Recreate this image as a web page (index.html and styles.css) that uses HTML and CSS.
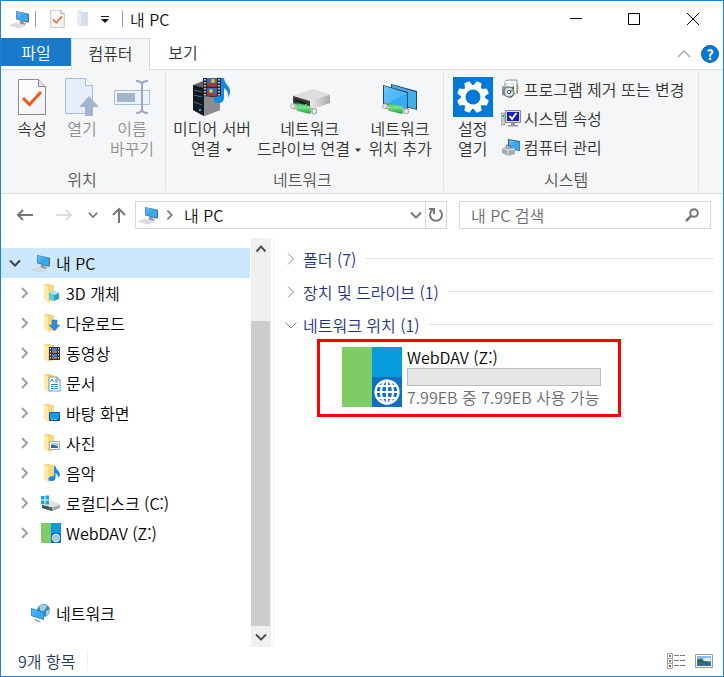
FILE: index.html
```html
<!DOCTYPE html>
<html lang="ko">
<head>
<meta charset="utf-8">
<meta name="viewport" content="width=device-width, initial-scale=1">
<title>내 PC</title>
<link rel="stylesheet" href="styles.css">
</head>
<body>
<svg class="defs" aria-hidden="true">
  <defs>
    <linearGradient id="screen" x1="0" y1="0" x2="1" y2="1"><stop offset="0" stop-color="#5cc4ff"/><stop offset=".5" stop-color="#31a8f7"/><stop offset="1" stop-color="#36b0fb"/></linearGradient>
    <linearGradient id="paper" x1="0" y1="0" x2="1" y2="1"><stop offset="0" stop-color="#fff"/><stop offset="1" stop-color="#eef1f5"/></linearGradient>
    <linearGradient id="metal" x1="0" y1="0" x2="1" y2="0"><stop offset="0" stop-color="#bfbfbf"/><stop offset=".5" stop-color="#e8e8e8"/><stop offset="1" stop-color="#a8a8a8"/></linearGradient>
    <linearGradient id="pipe" x1="0" y1="0" x2="0" y2="1"><stop offset="0" stop-color="#2fb54a"/><stop offset=".4" stop-color="#7be48c"/><stop offset="1" stop-color="#159a35"/></linearGradient>
  </defs>
  <symbol id="pc" viewBox="0 0 20 20">
    <path d="M6 2 19 4.700v8.300l-1.500.8L6 10.300z" fill="#5d6c77"/>
    <path d="M6.500 2.600 17.800 5v7.700L6.500 9.800z" fill="url(#screen)"/>
    <path d="m10 11.500 4 1.100v1.400l2.500.8-2.500 1.200-4.500-1.500z" fill="#8d99a3"/>
    <path d="m0 16 5-2.500 10 2.700-5 2.800z" fill="#dfe4e8"/><path d="m0 16 10 3 5-2.800v.6l-5 2.700-10-2.800z" fill="#b9c1c8"/>
    <path d="m2.500 15.500 8 2.300M5 14.500l8 2.200" stroke="#c3cbd1" stroke-width=".6"/>
  </symbol>
  <symbol id="check-page" viewBox="0 0 28 36">
    <path d="M.5.500h20l7 7v28H.5z" fill="url(#paper)" stroke="#8a8a8a"/><path d="M20.500.500v7h7" fill="#dfe3e8" stroke="#8a8a8a"/>
    <path d="m5 19 6.500 6.500L23 13" fill="none" stroke="#f05a1c" stroke-width="3"/>
  </symbol>
  <symbol id="folder" viewBox="0 0 20 20">
    <path d="M3 1h6l1 1h3v14l-7 1-3-1z" fill="#f5d272"/><path d="m3 1 4 2.500V19l-4-3z" fill="#ffe9a8"/><path d="m7 3.500 6-.5v14l-6 2z" fill="#f8d878"/>
  </symbol>
  <symbol id="right" viewBox="0 0 12 14"><path d="m3 2 5 5-5 5" fill="none" stroke="currentColor" stroke-width="2"/></symbol>
  <symbol id="thin-right" viewBox="0 0 12 14"><path d="m3 1.500 5.500 5.500L3 12.500" fill="none" stroke="currentColor"/></symbol>
  <symbol id="down" viewBox="0 0 14 12"><path d="m2 3.500 5 5 5-5" fill="none" stroke="currentColor" stroke-width="2"/></symbol>
  <symbol id="up" viewBox="0 0 14 12"><path d="m2.500 8.500 4.500-5 4.500 5" fill="none" stroke="currentColor" stroke-width="2"/></symbol>
  <symbol id="caret" viewBox="0 0 8 5"><path d="M1 0.500h6l-3 3.500z" fill="currentColor"/></symbol>
  <symbol id="cable" viewBox="0 0 30 14">
    <path d="M2 2.500 28 8v4L2 6.500z" fill="#c9ced0" stroke="#999"/><path d="M7 1 22 4.500v8.500L7 9.500z" fill="url(#pipe)"/>
    <ellipse cx="3" cy="4.500" rx="2.500" ry="2.600" fill="#e3e6e8" stroke="#aaa"/><ellipse cx="26" cy="10" rx="2.500" ry="3" fill="#e9ebec" stroke="#999"/>
  </symbol>
  <symbol id="webdav" viewBox="0 0 60 60">
    <path d="M0 0h30v60H0z" fill="#7fcc66"/><path d="M30 0h30v30H30z" fill="#059cdd"/><path d="M30 30h30v30H30z" fill="#0f6fc8"/>
    <g fill="none" stroke="#fff" stroke-width="2.200"><circle cx="45" cy="45" r="11.500"/><ellipse cx="45" cy="45" rx="6" ry="11.500"/><path d="M45 33v24M33 45h24M36 39h18M36 51h18"/></g>
  </symbol>
</svg>

<div class="window">
  <header class="titlebar">
    <svg class="i20"><use href="#pc"/></svg>
    <span class="sep"></span>
    <button class="quick" aria-label="속성"><svg width="15" height="18"><use href="#check-page"/></svg></button>
    <button class="quick" aria-label="새 폴더"><svg width="14" height="18" viewBox="0 0 14 18"><path d="M1 1h5v1h6v14H5z" fill="#d3deed"/><path d="m1 1 4 2v14l-4-2z" fill="#e8eef7"/></svg></button>
    <button class="quick more" aria-label="빠른 실행 도구 모음 사용자 지정"><svg width="8" height="8" viewBox="0 0 8 8"><path d="M0 1.500h8" stroke="#222"/><path d="M0 4h8L4 8z" fill="#111"/></svg></button>
    <span class="sep"></span>
    <h1 class="title">내 PC</h1>
    <div class="captions">
      <button aria-label="최소화"><svg width="14" height="14" viewBox="0 0 14 14"><path d="M1 6.500h12" stroke="#000"/></svg></button>
      <button aria-label="최대화"><svg width="14" height="14" viewBox="0 0 14 14"><path d="M1.500 1.500h11v11h-11z" fill="none" stroke="#000"/></svg></button>
      <button aria-label="닫기"><svg width="14" height="14" viewBox="0 0 14 14"><path d="m1 1 12 12M13 1 1 13" stroke="#000"/></svg></button>
    </div>
  </header>

  <nav class="tabs">
    <button class="tab file">파일</button>
    <button class="tab active">컴퓨터</button>
    <button class="tab">보기</button>
    <div class="tab-tools">
      <button aria-label="리본 최소화"><svg width="14" height="12" viewBox="0 0 14 12"><path d="m1 9 6-6 6 6" fill="none" stroke="#aaa" stroke-width="1.500"/></svg></button>
      <button class="help" aria-label="도움말">?</button>
    </div>
  </nav>

  <section class="ribbon">
    <div class="group places">
      <div class="tools">
        <button class="tool"><span class="pic"><svg width="28" height="36"><use href="#check-page"/></svg></span>속성</button>
        <button class="tool" disabled><span class="pic"><svg width="34" height="38" viewBox="0 0 34 38"><path d="M.5.500h20l7 7v28H.5z" fill="#e6eefa" stroke="#a9bcd8"/><path d="M20.500.500v7h7" fill="#f7faff" stroke="#a9bcd8"/><path d="m24 18 10 11h-6v9h-8v-9h-6z" fill="#a3b4cd"/></svg></span>열기</button>
        <button class="tool" disabled><span class="pic"><svg width="36" height="36" viewBox="0 0 36 36"><path d="M.5 11.500h35v14H.5z" fill="#edf3fc" stroke="#a9bcd8"/><path d="M3 14h18v9H3z" fill="#a3b4cd"/><path d="M22 2q6 0 6 4v24q0 4-6 4M34 2q-6 0-6 4v24q0 4 6 4" fill="none" stroke="#98aac4" stroke-width="2"/></svg></span>이름<br>바꾸기</button>
      </div>
      <h2>위치</h2>
    </div>
    <div class="group network">
      <div class="tools">
        <button class="tool"><span class="pic"><svg width="40" height="40" viewBox="0 0 40 40"><path d="m1 8 10-4 17 4v25l-16 6L1 33z" fill="#606367"/><path d="m1 8 11 3v28L1 33z" fill="#17191c"/><path d="m12 11 16-3v25l-16 6z" fill="#8b8d90"/><path d="m2 13 8 2M2 18l8 2M2 25l8 3" stroke="#187ac0"/><circle cx="8" cy="33" r="1.200" fill="#22a5ff"/><path d="M11 1h18v20l-18-2z" fill="#252a32"/><path d="M15 1h10v8.500H15zM15 11h10v8.500l-10-1z" fill="#336bc0"/><path d="M15 6h10v3.500H15zM15 15l10 2v2.500l-10-1z" fill="#a43c36"/><circle cx="21" cy="4" r="2.200" fill="#ddb126"/><circle cx="19" cy="14" r="2" fill="#e0ba37"/><path d="M13 2v17M27 2v18" stroke="#eee" stroke-width="1.500" stroke-dasharray="1.500 1.500"/><path d="M29 1h3c0 6 7 8 6 15l-2 5q1-7-4-10v10q0 5-6 5-4 0-4-3 0-4 7-4z" fill="#1189e6"/></svg></span>미디어 서버<br>연결 <svg class="caret"><use href="#caret"/></svg></button>
        <button class="tool drive"><span class="pic"><svg width="40" height="38" viewBox="0 0 40 38"><path d="M3 18 23 11l17 6v8l-20 7-17-6z" fill="url(#metal)"/><path d="m3 18 20-7 17 6-20 6z" fill="#dedede"/><path d="m3 18 17 5v8L3 25z" fill="#3c3f42"/><path d="m5 21 11 3.500v2L5 23z" fill="#16181b"/><path d="m15 26 2 .5v2l-2-.5z" fill="#53e35f"/><svg x="0" y="24" width="28" height="13"><use href="#cable"/></svg></svg></span>네트워크<br>드라이브 연결 <svg class="caret"><use href="#caret"/></svg></button>
        <button class="tool"><span class="pic"><svg width="36" height="36" viewBox="0 0 36 36"><path d="m9 5 26 7v19L9 24z" fill="#32424e"/><path d="m10 6 24 7v17l-24-7z" fill="#40afef"/><path d="m1 6 25 7v19L1 25z" fill="#2c4250"/><path d="m2 7 23 7v17L2 24z" fill="url(#screen)"/><path d="m2 7 23 7-19 11-4-1z" fill="#75ceff" opacity=".4"/><svg x="0" y="23" width="28" height="13"><use href="#cable"/></svg></svg></span>네트워크<br>위치 추가</button>
      </div>
      <h2>네트워크</h2>
    </div>
    <div class="group system">
      <div class="tools">
        <button class="tool"><span class="pic"><svg width="40" height="40" viewBox="0 0 40 40"><path d="M0 0h40v40H0z" fill="#0078d7"/><g transform="translate(20 20)" fill="#fff"><circle r="12"/><g id="teeth"><path id="tooth" d="M-4-11-2.700-16h5.400L4-11z" transform="rotate(22.500)"/><use href="#tooth" transform="rotate(45)"/><use href="#tooth" transform="rotate(90)"/><use href="#tooth" transform="rotate(135)"/></g><use href="#teeth" transform="rotate(180)"/><circle r="7.500" fill="#0078d7"/></g></svg></span>설정<br>열기</button>
        <div class="side">
          <button><svg class="i20" viewBox="0 0 20 20"><path d="M4 2 7 1h9v12l-3 2-9-2z" fill="#d9dcde" stroke="#9a9d9f"/><path d="M4 3h10v11M6 5l6 2" fill="none" stroke="#fff" stroke-width="2"/><path d="m1 7 9 2v10l-9-3z" fill="#8f9698"/><path d="m10 9 3-2v9l-3 3z" fill="#5c5b58"/><circle cx="8" cy="13" r="5" fill="#d8e4e4" stroke="#596366"/><path d="m8 13 3-3 2 3z" fill="#5eb6a8"/><circle cx="8" cy="13" r="1.700" fill="#fff" stroke="#555"/><path d="m16 5 1 3-1 7" stroke="#d2763b" fill="none"/></svg>프로그램 제거 또는 변경</button>
          <button><svg class="i20" viewBox="0 0 20 20"><path d="M0 5h4v12H0z" fill="#c9cccf" stroke="#777" stroke-width=".5"/><path d="M1 7h2v2H1z" fill="#25c438"/><path d="M4.500 2.500h15v12h-15z" fill="#ddd" stroke="#888"/><path d="M6 4h12v9H6z" fill="#131cbf"/><path d="m8.500 8 2.500 3 4.500-6" fill="none" stroke="#fff" stroke-width="2"/><path d="M10 15h4v2h3v1.500H7V17h3z" fill="#999"/></svg>시스템 속성</button>
          <button><svg class="i20" viewBox="0 0 20 20"><path d="m7 2 12 2v10L7 12z" fill="#405766"/><path d="m8 3 10.500 1.700v8.500L8 11z" fill="url(#screen)"/><path d="m1 11 7-2 6 3v5l-7 2-6-3z" fill="#a5abb0"/><path d="m1 11 6 2 7-1M7 13v6" fill="none" stroke="#e1e5e8"/><path d="m5 10 1-2 4 1v2" fill="none" stroke="#666"/></svg>컴퓨터 관리</button>
        </div>
      </div>
      <h2>시스템</h2>
    </div>
  </section>

  <div class="navbar">
    <div class="history">
      <button aria-label="뒤로"><svg width="18" height="14" viewBox="0 0 18 14"><path d="M17 7H2M7 2 2 7l5 5" fill="none" stroke="#777" stroke-width="2"/></svg></button>
      <button aria-label="앞으로" disabled><svg width="18" height="14" viewBox="0 0 18 14"><path d="M1 7h15m-5-5 5 5-5 5" fill="none" stroke="#ddd" stroke-width="2"/></svg></button>
      <button class="recent" aria-label="최근 위치"><svg width="12" height="10"><use href="#down"/></svg></button>
      <button class="parent" aria-label="위로"><svg width="14" height="16" viewBox="0 0 14 16"><path d="M7 16V2M1 8l6-6 6 6" fill="none" stroke="#777" stroke-width="2"/></svg></button>
    </div>
    <div class="address">
      <svg class="i20"><use href="#pc"/></svg>
      <svg class="crumb" width="12" height="12"><use href="#right"/></svg>
      <button class="place">내 PC</button>
      <button class="drop" aria-label="이전 위치"><svg width="14" height="12"><use href="#down"/></svg></button>
      <button class="refresh" aria-label="새로 고침"><svg width="16" height="16" viewBox="0 0 16 16"><path d="M11.500 3a6 6 0 1 1-7 0" fill="none" stroke="#777" stroke-width="2"/><path d="M1 2h5v5" fill="none" stroke="#777" stroke-width="2"/></svg></button>
    </div>
    <form class="search">
      <input type="search" aria-label="내 PC 검색" placeholder="내 PC 검색">
      <button type="button" aria-label="검색"><svg width="14" height="14" viewBox="0 0 14 14"><circle cx="9" cy="5" r="3.800" fill="none" stroke="#777" stroke-width="2"/><path d="m6 8-5 5" stroke="#777" stroke-width="2.500"/></svg></button>
    </form>
  </div>

  <main class="body">
    <nav class="tree" aria-label="탐색 창">
      <a class="node root selected" href="#"><svg class="chev open" width="14" height="12"><use href="#down"/></svg><svg class="i20"><use href="#pc"/></svg>내 PC</a>
      <a class="node" href="#"><svg class="chev"><use href="#right"/></svg><svg class="i20" viewBox="0 0 20 20"><use href="#folder"/><path d="m8 10 5-2 5 2v6l-5 2-5-2z" fill="#22a6c2"/><path d="m8 10 5-2 5 2-5 2z" fill="#a7edf3"/><path d="m8 10 5 2v6l-5-2z" fill="#56cedd"/></svg>3D 개체</a>
      <a class="node" href="#"><svg class="chev"><use href="#right"/></svg><svg class="i20" viewBox="0 0 20 20"><use href="#folder"/><path d="M11 7h5v5h3l-5.500 6L8 12h3z" fill="#2f8be0" stroke="#2c72bd" stroke-width=".5"/></svg>다운로드</a>
      <a class="node" href="#"><svg class="chev"><use href="#right"/></svg><svg class="i20" viewBox="0 0 20 20"><use href="#folder"/><path d="M8 4h11v13H8z" fill="#302e34"/><path d="M11 5h5v5h-5zM11 11h5v5h-5z" fill="#457bd4"/><path d="M11 8h5v2h-5zM11 14h5v2h-5z" fill="#ab7750"/><path d="M9.500 5v12M17.500 5v12" stroke="#eee" stroke-dasharray="1.500 1.500"/></svg>동영상</a>
      <a class="node" href="#"><svg class="chev"><use href="#right"/></svg><svg class="i20" viewBox="0 0 20 20"><use href="#folder"/><path d="M8 4h8l3 3v11H8z" fill="#fff" stroke="#87939d"/><path d="M16 4v3h3" fill="none" stroke="#87939d"/><path d="m9.500 9 1.500-3 1.500 3M14 7h2M14 9h3M10 11.500h7M10 13.500h3m1 0h3M10 15.500h7" fill="none" stroke="#2788c5"/></svg>문서</a>
      <a class="node" href="#"><svg class="chev"><use href="#right"/></svg><svg class="i20" viewBox="0 0 20 20"><use href="#folder"/><path d="M8.500 9.500h10v8h-10z" fill="#149bed" stroke="#155f9b"/><path d="M9 16h9v1.500H9z" fill="#093c78"/><path d="M10 16.500h2m1 0h3" stroke="#7ed3ff"/></svg>바탕 화면</a>
      <a class="node" href="#"><svg class="chev"><use href="#right"/></svg><svg class="i20" viewBox="0 0 20 20"><use href="#folder"/><path d="M8.500 8.500h10v8h-10z" fill="#fff" stroke="#a2a5a8"/><path d="M10 10h7v5h-7z" fill="#9bcff2"/><path d="M10 12q3-1 7 2v1h-7z" fill="#3c6780"/></svg>사진</a>
      <a class="node" href="#"><svg class="chev"><use href="#right"/></svg><svg class="i20" viewBox="0 0 20 20"><use href="#folder"/><path d="M13 3h1.500c0 4 5 5 4.500 9l-2 3q0-4-2.500-5v5q0 3-4 3-3 0-3-2 0-3 5.500-3z" fill="#138ce8"/></svg>음악</a>
      <a class="node" href="#"><svg class="chev"><use href="#right"/></svg><svg class="i20" viewBox="0 0 20 20"><path d="m1 12 10-4 8 4v3l-8 3-10-3z" fill="#a4a7a9"/><path d="m1 12 10-4 8 4-8 2.500z" fill="#e2e3e4"/><path d="m1 12 10 2.500V18L1 15z" fill="#4b4e50"/><path d="m8 15 1.500.5" stroke="#60ec68"/><path d="M0 3h3.500v3.500H0zM4.500 2.500H8v4H4.500zM0 7.500h3.500V11H0zM4.500 7.500H8v4H4.500z" fill="#14a5eb"/></svg>로컬디스크 (C:)</a>
      <a class="node" href="#"><svg class="chev"><use href="#right"/></svg><svg class="i20"><use href="#webdav"/></svg>WebDAV (Z:)</a>
      <a class="node root net" href="#"><span class="chev open"></span><svg class="i20" viewBox="0 0 20 20"><circle cx="12.500" cy="7.500" r="6.500" fill="#3a87b5"/><path d="M8 3q4-3 8 0l-2 4-4 2zM15 8l4-2-1 5-3 2z" fill="#a2d0e1"/><path d="m0 5 13 4v8L0 13z" fill="#2777a8"/><path d="m.5 6 12 3.500v6.500L.5 12.500z" fill="url(#screen)"/><path d="m4 16 6 2-2 1.500-5-2z" fill="#a9b0b4"/></svg>네트워크</a>
    </nav>
    <div class="scroll">
      <button aria-label="위로 스크롤"><svg width="14" height="12"><use href="#up"/></svg></button>
      <span class="track"></span>
      <span class="thumb"></span>
      <button aria-label="아래로 스크롤"><svg width="14" height="12"><use href="#down"/></svg></button>
    </div>
    <section class="content">
      <h2 class="section"><svg class="fold"><use href="#thin-right"/></svg>폴더 (7)</h2>
      <h2 class="section"><svg class="fold"><use href="#thin-right"/></svg>장치 및 드라이브 (1)</h2>
      <h2 class="section"><svg class="fold" viewBox="0 0 12 14"><path d="m.5 4.500 5.500 5.500 5.500-5.500" fill="none" stroke="currentColor"/></svg>네트워크 위치 (1)</h2>
      <a class="drive-tile" href="#">
        <svg width="60" height="60"><use href="#webdav"/></svg>
        <span class="info">
          <span class="name">WebDAV (Z:)</span>
          <span class="meter"></span>
          <span class="free">7.99EB 중 7.99EB 사용 가능</span>
        </span>
      </a>
    </section>
  </main>

  <footer class="status">
    <span class="count">9개 항목</span>
    <div class="views">
      <button aria-label="자세히"><svg width="18" height="16" viewBox="0 0 18 16"><path d="M.5.500h5v15h-5zM.5 5.500h5M.5 10.500h5" fill="#fff" stroke="#a6a6a6"/><path d="M2 2h2v2H2z" fill="#4b7db0"/><path d="M2 7h2v2H2z" fill="#6b8f2e"/><path d="M2 12h2v2H2z" fill="#b54a1f"/><path d="M7 2.500h5m1 0h5M7 7.500h5m1 0h5M7 12.500h5m1 0h5" stroke="#777"/></svg></button>
      <button aria-label="큰 아이콘"><svg width="18" height="14" viewBox="0 0 18 14"><path d="M.5.500h17v13H.5z" fill="#fff" stroke="#999"/><path d="M2 2h14v10H2z" fill="#83bce9"/><path d="M2 6q4-3 7 1l7 1v2H2z" fill="#356452"/><path d="M2 9h14v3H2z" fill="#316f9e"/><path d="M8 5q4-3 8 0v2H9z" fill="#d7ebf6"/></svg></button>
    </div>
  </footer>
</div>
</body>
</html>
```
FILE: styles.css
```css
* { box-sizing: border-box; }
body {
  margin: 0;
  font: 350 16px/20px "Noto Sans CJK KR", sans-serif;
  color: #111;
}
button, input { font: inherit; color: inherit; }
button {
  display: flex;
  align-items: center;
  justify-content: center;
  padding: 0;
  border: 0;
  background: none;
}
a { color: inherit; text-decoration: none; }
h1, h2 { margin: 0; font: inherit; }
svg { flex: none; }
.defs { position: absolute; width: 0; height: 0; }
.i20 { width: 20px; height: 20px; }

.window {
  display: flex;
  flex-direction: column;
  min-height: 100vh;
  border: 1px solid #1883d7;
  background: #fff;
}

/* Title bar */
.titlebar { display: flex; align-items: center; height: 37px; padding: 0 0 2px 9px; }
.sep { width: 1px; height: 16px; margin-left: 5px; background: #999; }
.quick { margin-left: 14px; }
.quick + .quick { margin-left: 11px; }
.quick.more { margin-right: 8px; }
.title { margin-left: 7px; }
.captions { display: flex; margin-left: auto; }
.captions button { width: 58px; height: 34px; }
.captions button:last-child { width: 60px; }

/* Tabs */
.tabs {
  display: flex;
  height: 32px;
  border-bottom: 1px solid #dadbdc;
}
.tab { width: 66px; height: 28px; padding-bottom: 1px; color: #333; }
.tab.file { width: 70px; background: #1979ca; color: #fff; }
.tab.active {
  width: 79px;
  height: 32px;
  padding-bottom: 4px;
  border: 1px solid #dadbdc;
  border-bottom: 0;
  background: #f5f6f7;
}
.tab-tools { display: flex; align-items: center; gap: 10px; margin-left: auto; padding-right: 4px; }
.help {
  width: 18px;
  height: 18px;
  border: 1px solid #1861a8;
  border-radius: 50%;
  background: #0078d7;
  color: #fff;
  font-weight: 700;
  font-size: 14px;
}

/* Ribbon */
.ribbon {
  display: flex;
  height: 124px;
  padding: 2px 0;
  border-bottom: 1px solid #dadbdc;
  background: #f5f6f7;
  color: #333;
}
.group {
  display: flex;
  flex-direction: column;
  justify-content: space-between;
  padding: 4px 8px 0 6px;
  border-right: 1px solid #e1e2e3;
}
.group h2 { color: #555; text-align: center; line-height: 24px; }
.tools { display: flex; align-items: flex-start; }
.tool { display: block; min-width: 50px; }
.tool:disabled { color: #8f8f8f; }
.pic { display: flex; align-items: center; justify-content: center; height: 42px; }
.network .tools { gap: 6px; }
.network { padding: 4px 11px 0 7px; }
.system { padding: 4px 14px 0 4px; }
.caret { width: 8px; height: 5px; vertical-align: middle; }
.side { display: flex; flex-direction: column; gap: 3px; margin-left: 3px; }
.side button { justify-content: flex-start; gap: 3px; height: 26px; }

/* Address row */
.navbar { display: flex; height: 44px; padding: 7px 12px 9px 4px; color: #777; }
.history { display: flex; }
.history button { width: 39px; height: 28px; }
.history .recent { width: 20px; }
.history .parent { width: 32px; }
.address, .search { display: flex; align-items: center; height: 28px; border: 1px solid #d9d9d9; }
.address { flex: 1; padding-left: 3px; }
.crumb { margin: 0 8px 0 5px; }
.place { color: #111; }
.drop { margin-left: auto; width: 18px; height: 26px; }
.refresh { width: 21px; height: 26px; border-left: 1px solid #d9d9d9; }
.search { flex: 0 0 252px; margin-left: 12px; padding: 0 11px; }
.search input { flex: 1; min-width: 0; padding: 0; border: 0; outline: 0; background: none; }
.search input::placeholder { color: #6d6d6d; opacity: 1; }

/* Panes */
.body { display: grid; grid-template-columns: 250px 20px 1fr; flex: 1; }
.tree { padding-top: 10px; color: #000; }
.node { display: flex; align-items: center; height: 30px; padding-left: 18px; }
.node .i20 { margin-right: 5px; }
.node .chev { width: 12px; height: 14px; margin-right: 10px; color: #a0a0a0; }
.node.root { width: 249px; padding-left: 7px; }
.node.root .chev { width: 14px; margin-right: 9px; color: #404040; }
.selected { background: #cce8ff; }
.net { margin-top: 50px; }
.scroll { display: flex; flex-direction: column; background: #f0f0f0; color: #505050; }
.scroll button { height: 21px; }
.track { flex: 62; }
.thumb { flex: 305; margin-right: 1px; background: #cdcdcd; }
.content { margin-left: 2px; padding: 4px 9px 0 11px; border-left: 1px solid #f0f0f0; }
.section { display: flex; align-items: center; height: 33px; color: #1e3287; }
.section::after { content: ""; flex: 1; height: 1px; margin-left: 9px; background: #e2e2e2; }
.fold { width: 12px; height: 14px; margin-right: 6px; color: #888; }
.drive-tile {
  display: flex;
  gap: 5px;
  width: 304px;
  max-width: 100%;
  height: 78px;
  margin: -2px 0 0 32px;
  padding: 5px 17px 0 22px;
  border: 3px solid #f00;
  color: #000;
}
.info { display: flex; flex: 1; flex-direction: column; }
.meter { height: 18px; margin: 1px 0; border: 1px solid #bcbcbc; background: #e6e6e6; }
.free { color: #6d6d6d; }

/* Status bar */
.status { display: flex; align-items: center; justify-content: space-between; height: 29px; padding: 0 10px 2px 17px; color: #1e395b; }
.count { padding-right: 12px; border-right: 1px solid #f0f0f0; }
.views { display: flex; gap: 10px; }
```
